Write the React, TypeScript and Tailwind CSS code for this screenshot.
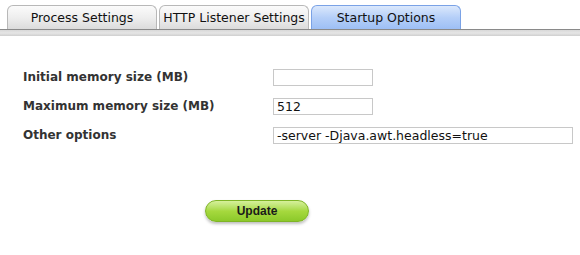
import React from "react";

const tabBase =
  "w-[150px] h-[24px] rounded-t-[6px] border border-b-0 flex items-center justify-center text-[12.5px] text-[#111] pt-[2px]";

export default function App() {
  const tabs = ["Process Settings", "HTTP Listener Settings", "Startup Options"];
  return (
    <div
      className="w-[580px] h-[255px] bg-white overflow-hidden"
      style={{ fontFamily: "'DejaVu Sans', Verdana, sans-serif" }}
    >
      <div className="flex gap-[2px] pl-[7px] pt-[5px]">
        {tabs.map((t, i) =>
          i === 2 ? (
            <div
              key={t}
              className={`${tabBase} border-[#7aa2e6] bg-gradient-to-b from-[#dbe8fc] via-[#b5cff8] to-[#9dbff5]`}
            >
              {t}
            </div>
          ) : (
            <div
              key={t}
              className={`${tabBase} border-[#b8b8b8] bg-gradient-to-b from-[#fbfbfb] via-[#eeeeee] to-[#dcdcdc]`}
            >
              {t}
            </div>
          )
        )}
      </div>
      <div className="h-[7px] border-t border-[#8a8a8a] bg-gradient-to-b from-[#d8d8d8] via-[#e6e6e6] to-[#cfcfcf]" />
      <div className="pl-[23px] pt-[32px] grid grid-cols-[250px_1fr] gap-y-[11px] items-center">
        <div className="text-[12px] font-bold text-[#333]">Initial memory size (MB)</div>
        <div className="w-[100px] h-[17px] border border-[#c8c8c8]" />
        <div className="text-[12px] font-bold text-[#333]">Maximum memory size (MB)</div>
        <div className="w-[100px] h-[17px] border border-[#c8c8c8] text-[12.5px] leading-[15px] pl-[3px] text-[#111]">
          512
        </div>
        <div className="text-[12px] font-bold text-[#333]">Other options</div>
        <div className="w-[300px] h-[17px] border border-[#c8c8c8] text-[12.5px] leading-[15px] pl-[3px] text-[#111]">
          -server -Djava.awt.headless=true
        </div>
      </div>
      <div className="pl-[205px] pt-[56px]">
        <div
          className="w-[104px] h-[22px] rounded-full border border-[#7eb426] bg-gradient-to-b from-[#d6f09a] via-[#a6d93e] to-[#8cc92a] shadow-[0_2px_3px_rgba(0,0,0,0.25)] flex items-center justify-center text-[12px] font-bold text-[#1a1a1a]"
          style={{ fontFamily: "'Liberation Sans', Arial, sans-serif" }}
        >
          Update
        </div>
      </div>
    </div>
  );
}
